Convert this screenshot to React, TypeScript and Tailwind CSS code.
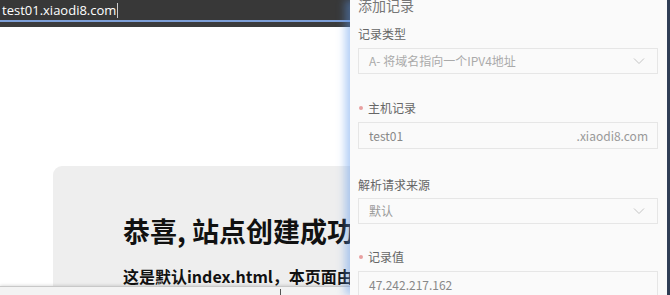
import React from 'react';

const cjk = { fontFamily: '"Noto Sans CJK SC", "Noto Sans", sans-serif' };

function Chevron() {
  return (
    <svg width="12" height="8" viewBox="0 0 12 8" className="shrink-0">
      <polyline points="1,1.5 6,6.5 11,1.5" fill="none" stroke="#c4c4c4" strokeWidth="1" />
    </svg>
  );
}

function Label({ text, required }: { text: string; required?: boolean }) {
  return (
    <div className="flex items-center h-4 text-[12px] leading-4 text-[#666]">
      {required && <span className="w-[4px] h-[4px] rounded-full bg-[#e8a0a0] mr-[5px] ml-[1px]" />}
      {text}
    </div>
  );
}

export default function App() {
  return (
    <div className="w-[670px] h-[295px] flex overflow-hidden bg-white" style={cjk}>
      {/* left: browser page */}
      <div className="w-[350px] shrink-0 flex flex-col">
        <div className="h-[20px] bg-[#383838] flex items-center pl-[2px]">
          <span className="text-[13px] text-white leading-none" style={{ fontFamily: '"Open Sans", "Noto Sans", sans-serif' }}>
            test01.xiaodi8.com
          </span>
          <span className="w-px h-[15px] bg-[#ccc] ml-px" />
        </div>
        <div className="h-[2px] bg-[#7d9fd8]" />
        <div className="h-[5px] bg-[#3c3c3c]" />
        <div className="flex-1 overflow-hidden pt-[139px] pl-[53px]">
          <div className="w-[400px] h-[200px] bg-[#eeeeee] rounded-tl-[9px] pl-[70px] pt-[50px]">
            <h1 className="text-[27px] font-bold text-[#111] leading-[30px] whitespace-nowrap">恭喜, 站点创建成功！</h1>
            <p className="mt-[20px] text-[16px] font-bold text-[#111] whitespace-nowrap leading-[20px]">
              这是默认index.html，本页面由系统自动生成
            </p>
          </div>
        </div>
        <div className="h-[9px] shrink-0 bg-[#f3f3f3] border-t border-[#c8c8c8] shadow-[0_-1px_3px_rgba(0,0,0,0.12)] flex">
          <div className="w-[280px]" />
          <div className="w-px bg-[#555] mt-[2px]" />
        </div>
      </div>

      {/* right: add record panel */}
      <div className="w-[317px] shrink-0 bg-[#fafafa] pl-[8px] pr-[9px] shadow-[-5px_0_8px_rgba(90,150,235,0.45)] relative">
        <div className="-mt-[5px] text-[14px] text-[#777] leading-[20px]">添加记录</div>

        <div className="mt-[11px]">
          <Label text="记录类型" />
        </div>
        <div className="mt-[6px] h-[26px] border border-[#e6e6e6] bg-[#fafafa] flex items-center justify-between pl-[10px] pr-[12px]">
          <span className="text-[12px] leading-4 text-[#aaa]">A- 将域名指向一个IPV4地址</span>
          <Chevron />
        </div>

        <div className="mt-[26px]">
          <Label text="主机记录" required />
        </div>
        <div className="mt-[6px] h-[27px] border border-[#e6e6e6] bg-[#fafafa] flex items-center justify-between pl-[10px] pr-[9px]">
          <span className="text-[12px] leading-4 text-[#888]">test01</span>
          <span className="text-[12px] leading-4 text-[#999]">.xiaodi8.com</span>
        </div>

        <div className="mt-[28px]">
          <Label text="解析请求来源" />
        </div>
        <div className="mt-[5px] h-[26px] border border-[#e6e6e6] bg-[#fafafa] flex items-center justify-between pl-[10px] pr-[12px]">
          <span className="text-[12px] leading-4 text-[#999]">默认</span>
          <Chevron />
        </div>

        <div className="mt-[25px]">
          <Label text="记录值" required />
        </div>
        <div className="mt-[6px] h-[28px] border border-[#e6e6e6] bg-[#fafafa] flex items-center pl-[10px]">
          <span className="text-[12px] leading-4 text-[#888]">47.242.217.162</span>
        </div>
      </div>

      <div className="w-[3px] shrink-0 bg-[#2f3c52]" />
    </div>
  );
}
